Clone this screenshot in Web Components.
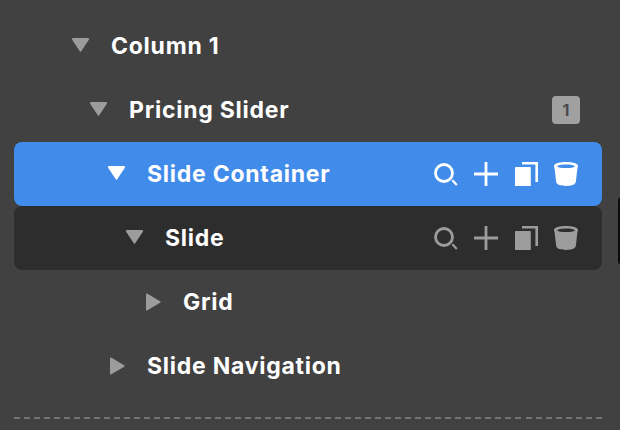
<!DOCTYPE html>
<html>
<head>
<meta charset="utf-8">
<title>Layers</title>
<style>
  html, body { margin: 0; height: 100%; background: #414141; overflow: hidden; }
</style>
</head>
<body>
<layer-panel>
  <layer-row level="0" open>Column 1</layer-row>
  <layer-row level="1" open badge="1">Pricing Slider</layer-row>
  <layer-row level="2" open state="selected">Slide Container</layer-row>
  <layer-row level="3" open state="hover">Slide</layer-row>
  <layer-row level="4">Grid</layer-row>
  <layer-row level="2">Slide Navigation</layer-row>
  <dashed-rule></dashed-rule>
</layer-panel>

<script>
// Panel wrapper, rows go in the slot
class LayerPanel extends HTMLElement {
  constructor() {
    super();
    this.attachShadow({ mode: "open" });
    this.shadowRoot.innerHTML = `
      <style>
        :host {
          display: block;
          position: relative;
          width: 620px;
          height: 430px;
          box-sizing: border-box;
          padding: 14px 18px 0 14px;
          font-family: Inter, "Liberation Sans", sans-serif;
          color: #fff;
        }
        .sliver {
          position: absolute;
          left: 618px;
          top: 197px;
          width: 8px;
          height: 68px;
          border-radius: 6px;
          background: #0c0c0c;
        }
      </style>
      <slot></slot>
      <div class="sliver"></div>
    `;
  }
}

class LayerRow extends HTMLElement {
  constructor() {
    super();
    this.attachShadow({ mode: "open" });
  }

  connectedCallback() {
    const level = Number(this.getAttribute("level") || 0);
    const open = this.hasAttribute("open");
    const state = this.getAttribute("state");
    const badge = this.getAttribute("badge");
    const arrow = open
      ? `<path d="M1 2.500a1 1 0 0 1 .9-1.500h15.200a1 1 0 0 1 .9 1.500l-7.600 11.600a1 1 0 0 1-1.800 0z"/>`
      : `<path d="M3 1.600a1 1 0 0 1 1.500-.8l12.600 7.400a1 1 0 0 1 0 1.600L4.500 17.200a1 1 0 0 1-1.500-.8z"/>`;

    this.shadowRoot.innerHTML = `
      <style>
        :host {
          display: flex;
          align-items: center;
          height: 64px;
          box-sizing: border-box;
          padding-left: calc(57px + 18px * var(--level));
          padding-right: 24px;
          font-size: 23px;
          font-weight: 700;
          letter-spacing: 0.75px;
          --fade: #9c9c9c;
        }
        :host([state="selected"]) {
          background: #418bea;
          border-radius: 8px;
          --fade: #fff;
        }
        :host([state="hover"]) {
          background: #2d2d2d;
          border-radius: 8px;
        }
        .arrow {
          flex: none;
          width: 19px;
          height: 19px;
          margin-right: 21px;
          fill: var(--fade);
        }
        .label { flex: 1; white-space: nowrap; padding-bottom: 1px; }
        .badge {
          width: 28px;
          height: 28px;
          margin-right: -2px;
          display: flex;
          align-items: center;
          justify-content: center;
          border-radius: 4px;
          background: #a0a0a0;
          color: #4a4a4a;
          font-size: 16px;
          font-weight: 700;
          letter-spacing: 0;
        }
        .actions { display: flex; gap: 16px; }
        .actions svg {
          display: block;
          width: 24px;
          height: 24px;
          fill: none;
          stroke: var(--fade);
          stroke-width: 2.8;
        }
        .actions .solid { fill: var(--fade); stroke: none; }
      </style>
      <svg class="arrow" viewBox="0 0 19 19">${arrow}</svg>
      <span class="label"><slot></slot></span>
      ${badge ? `<span class="badge">${badge}</span>` : ""}
      ${state ? this.actionsMarkup() : ""}
    `;
    this.style.setProperty("--level", level);
  }

  actionsMarkup() {
    return `
      <div class="actions">
        <svg viewBox="0 0 24 24">
          <circle cx="10" cy="11" r="8.500"/>
          <path d="M18.400 18.200l4.400 4.800" stroke-width="2.200"/>
        </svg>
        <svg viewBox="0 0 24 24"><path d="M0 12h24M12 0v24"/></svg>
        <svg viewBox="0 0 24 24">
          <path class="solid" d="M1.600 5h14.600a.6.6 0 0 1 .6.6V24H1.600a.6.6 0 0 1-.6-.6V5.600a.6.6 0 0 1 .6-.6z"/>
          <path d="M8 1.300h14.700V20" stroke-width="2.600"/>
        </svg>
        <svg viewBox="0 0 24 24">
          <path class="solid" fill-rule="evenodd" d="M12 0C6 0 0 1.200 0 4c0 1 .5 1.800 .7 3l1.400 12.600C2.400 22.800 6.400 24 12 24s9.600-1.200 9.900-4.400L23.300 7c.2-1.200 .7-2 .7-3 0-2.800-6-4-12-4zM12 2.600c4.800 0 8.200 .8 8.900 1.900-1.300 1-4.700 1.500-8.900 1.500s-7.600-.5-8.900-1.500C3.800 3.400 7.200 2.600 12 2.600z"/>
        </svg>
      </div>
    `;
  }
}

class DashedRule extends HTMLElement {
  constructor() {
    super();
    this.attachShadow({ mode: "open" });
    this.shadowRoot.innerHTML = `
      <style>
        :host {
          display: block;
          height: 2px;
          margin-top: 19px;
          background: repeating-linear-gradient(90deg, #737373 0 6px, transparent 6px 10.03px);
        }
      </style>
    `;
  }
}

customElements.define("layer-panel", LayerPanel);
customElements.define("layer-row", LayerRow);
customElements.define("dashed-rule", DashedRule);
</script>
</body>
</html>
